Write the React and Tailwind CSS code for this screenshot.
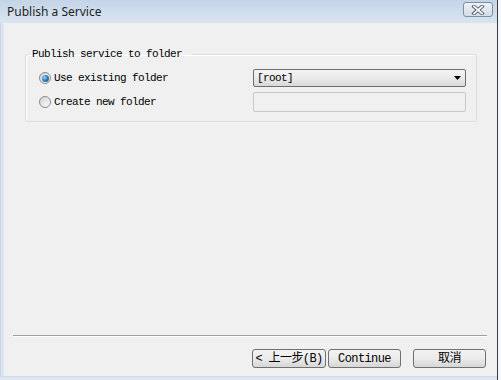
import React from "react";

const mono = { fontFamily: '"Liberation Mono", "Noto Sans CJK SC", monospace' };

function Radio({ checked }) {
  return (
    <span className="w-[12px] h-[12px] rounded-full border border-[#8a8a8a] bg-gradient-to-br from-[#d4d4d4] to-[#fbfbfb] flex items-center justify-center shrink-0">
      {checked && (
        <span className="w-[7px] h-[7px] rounded-full bg-[radial-gradient(circle_at_35%_35%,#9fd3f0_0%,#2c86c0_45%,#134a75_100%)]" />
      )}
    </span>
  );
}

function Btn({ children, className = "" }) {
  return (
    <div
      className={
        "h-[19px] rounded-[3px] border border-[#707070] bg-gradient-to-b from-[#f3f3f3] via-[#ebebeb] to-[#d6d6d6] flex items-center justify-center text-[12px] text-black leading-none tracking-[-0.6px] " +
        className
      }
      style={mono}
    >
      {children}
    </div>
  );
}

export default function App() {
  return (
    <div className="w-[501px] h-[380px] flex bg-[#f4f7fb] overflow-hidden">
      <div className="w-[498px] h-full flex flex-col border-r border-[#3c3c3c]">
        {/* title bar */}
        <div className="h-[23px] bg-gradient-to-b from-[#c4d4e7] to-[#dae5f1] flex items-center justify-between pl-[7px] pr-[3px] shrink-0">
          <span
            className="text-[12px] text-[#1f1f1f] leading-none mt-[1px]"
            style={{ fontFamily: '"Noto Sans", "Open Sans", sans-serif' }}
          >
            Publish a Service
          </span>
          <div className="w-[30px] h-[15px] -mt-[4px] mr-[1px] rounded-[3px] border border-[#7d8ea5] bg-gradient-to-b from-[#eef2f7] to-[#d3dce8] flex items-center justify-center">
            <svg width="14" height="10" viewBox="0 0 14 10">
              <path d="M3 1.5 L11 8.5 M11 1.5 L3 8.5" stroke="#4a5565" strokeWidth="3.6" strokeLinecap="square" />
              <path d="M3 1.5 L11 8.5 M11 1.5 L3 8.5" stroke="#ffffff" strokeWidth="1.8" strokeLinecap="square" />
            </svg>
          </div>
        </div>
        {/* body */}
        <div className="flex-1 flex flex-col">
          <div className="flex-1 flex">
            <div className="w-[4px] bg-[#dde6f0] border-l border-[#c9d5e2]" />
            <div className="flex-1 bg-[#f0f0f0] flex flex-col">
              <fieldset className="mt-[24px] ml-[21px] mr-[20px] border border-[#d5dfe5] rounded-[3px] shadow-[inset_1px_1px_0_#ffffff] px-0 pt-[8px] pb-[9px]">
                <legend
                  className="ml-[4px] pl-[2px] pr-[10px] text-[11px] leading-[14px] tracking-[-0.6px] text-black"
                  style={mono}
                >
                  Publish service to folder
                </legend>
                <div className="flex flex-col gap-[5px] pl-[13px] pr-[10px]">
                  <div className="flex items-center h-[18px]">
                    <div className="flex items-center gap-[3px] w-[214px]">
                      <Radio checked />
                      <span className="text-[11px] leading-none tracking-[-0.6px] text-black" style={mono}>
                        Use existing folder
                      </span>
                    </div>
                    <div className="flex-1 h-[18px] rounded-[2px] border border-[#6f6f6f] bg-gradient-to-b from-[#f4f4f4] via-[#eaeaea] to-[#d9d9d9] flex items-center justify-between pl-[3px] pr-[4px]">
                      <span className="text-[11px] leading-none tracking-[-0.6px] text-black" style={mono}>
                        [root]
                      </span>
                      <svg width="7" height="4" viewBox="0 0 7 4">
                        <path d="M0 0 H7 L3.5 4 Z" fill="#000" />
                      </svg>
                    </div>
                  </div>
                  <div className="flex items-center h-[20px]">
                    <div className="flex items-center gap-[3px] w-[214px]">
                      <Radio />
                      <span className="text-[11px] leading-none tracking-[-0.6px] text-black" style={mono}>
                        Create new folder
                      </span>
                    </div>
                    <div className="flex-1 h-[20px] rounded-[2px] border border-[#c9c9c9] bg-[#f0f0f0]" />
                  </div>
                </div>
              </fieldset>
              <div className="flex-1" />
              <div className="ml-[9px] mr-[10px] h-[2px] border-t border-[#a0a0a0] border-b border-b-white" />
              <div className="flex justify-end items-center mt-[12px] mb-[8px] mr-[11px]">
                <Btn className="w-[74px]">&lt; 上一步(B)</Btn>
                <Btn className="w-[73px] ml-[2px]">Continue</Btn>
                <Btn className="w-[73px] ml-[12px]">取消</Btn>
              </div>
            </div>
          </div>
          <div className="h-[4px] bg-[#dde6f0] border-t border-[#d0dae6]" />
        </div>
      </div>
    </div>
  );
}
